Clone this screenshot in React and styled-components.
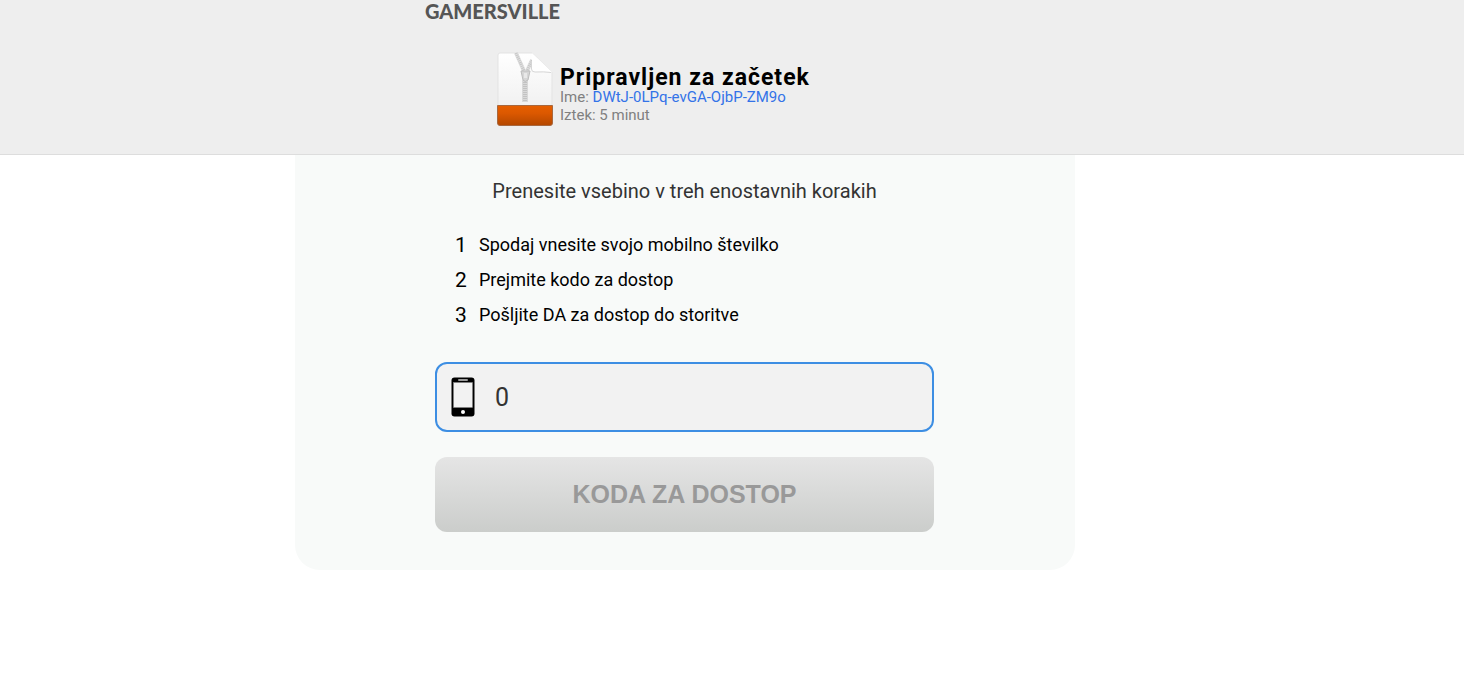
import React, { useState } from 'react';
import styled, { createGlobalStyle } from 'styled-components';

const GlobalStyle = createGlobalStyle`
    * {
        box-sizing: border-box;
    }

    body {
        margin: 0;
        background: #fff;
        font-family: Roboto, sans-serif;
    }
`;

const Header = styled.header`
    padding: 0 94px 28px 0;
    background: #eee;
    border-bottom: 1px solid #ddd;
`;

const HeaderInner = styled.div`
    max-width: 520px;
    margin: 0 auto;
`;

const Logo = styled.div`
    color: #555;
    font-family: Lato, sans-serif;
    font-size: 20px;
    font-weight: 900;
    line-height: 22px;
`;

const FileBox = styled.div`
    display: flex;
    gap: 7px;
    padding: 30px 0 0 72px;
`;

const FileInfo = styled.div`
    padding-top: 16px;
    color: #808080;
    font-size: 15px;
    line-height: 18px;
`;

const Title = styled.h1`
    margin: 0;
    color: #000;
    font-size: 23px;
    font-weight: 700;
    line-height: 20px;
    letter-spacing: 1px;
`;

const FileName = styled.span`
    color: #3373e8;
`;

const Main = styled.main`
    padding-right: 94px;
`;

const Card = styled.section`
    max-width: 780px;
    margin: 0 auto;
    padding: 24px 141px 38px 140px;
    background: #f8faf9;
    border-radius: 0 0 25px 25px;
`;

const Subtitle = styled.h2`
    margin: 0 0 24px;
    color: #333;
    font-size: 20px;
    font-weight: 400;
    line-height: 24px;
    text-align: center;
`;

const Steps = styled.ol`
    margin: 0 0 30px;
    padding: 0 0 0 20px;
    list-style: none;
`;

const Step = styled.li`
    display: flex;
    align-items: center;
    height: 35px;
    font-size: 18px;
`;

const StepNumber = styled.span`
    width: 24px;
    font-size: 21px;
`;

const PhoneField = styled.label`
    display: flex;
    align-items: center;
    gap: 20px;
    height: 70px;
    padding: 0 14px;
    background: #f2f2f2;
    border: 2px solid #3d8ee3;
    border-radius: 12px;
`;

const PhoneInput = styled.input`
    flex: 1;
    min-width: 0;
    padding: 0;
    border: 0;
    outline: 0;
    background: transparent;
    color: #333;
    font-family: inherit;
    font-size: 25px;
`;

const SubmitButton = styled.button`
    display: block;
    width: 100%;
    height: 75px;
    margin-top: 25px;
    border: 0;
    border-radius: 12px;
    background: linear-gradient(#e5e5e5, #cbcdcb);
    color: #999;
    font-family: 'Liberation Sans', Arial, sans-serif;
    font-size: 25px;
    font-weight: 700;
`;

const steps = [
    'Spodaj vnesite svojo mobilno številko',
    'Prejmite kodo za dostop',
    'Pošljite DA za dostop do storitve',
];

function ZipIcon() {
    return (
        <svg width="56" height="74" viewBox="0 0 56 74" aria-hidden="true">
            <defs>
                <linearGradient id="paper" x1="0" y1="0" x2="0" y2="1">
                    <stop offset="0" stopColor="#fff" />
                    <stop offset="1" stopColor="#ececec" />
                </linearGradient>
                <linearGradient id="band" x1="0" y1="0" x2="0" y2="1">
                    <stop offset="0" stopColor="#e65f00" />
                    <stop offset="0.4" stopColor="#db5800" />
                    <stop offset="1" stopColor="#b34700" />
                </linearGradient>
            </defs>
            <path d="M3 1H35L55 20V71Q55 73 53 73H3Q1 73 1 71V3Q1 1 3 1Z" fill="url(#paper)" stroke="#e3e3e3" />
            <path d="M.5 53.5H55.5V71Q55.500 73.500 53 73.5H3Q.5 73.5 .5 71Z" fill="url(#band)" stroke="#a8683f" />
            <path d="M19 1L27 19M35 8L30 19" fill="none" stroke="#e0e0e0" strokeWidth="4" />
            <path d="M19 1L27 19M35 8L30 19" fill="none" stroke="#c6c6c6" strokeWidth="3" strokeDasharray="1 1" />
            <path d="M28 28V50" stroke="#d9d9d9" strokeWidth="6" />
            <path d="M28 28V50" stroke="#c2c2c2" strokeWidth="4" strokeDasharray="1 1" />
            <path d="M24 19H33L31 28Q28 31 26 28Z" fill="#d6d6d6" stroke="#bcbcbc" />
            <path d="M27 21H30V26H27Z" fill="#e8e8e8" />
            <path d="M35 1L35 18Q35 20 38 20Q46 19 55 20Z" fill="#fff" />
            <path d="M34.5 9V17Q34.5 20 38 20Q47 19.5 54 20.5" fill="none" stroke="#d6d6d6" />
        </svg>
    );
}

function PhoneIcon() {
    return (
        <svg width="24" height="40" viewBox="0 0 24 40" aria-hidden="true">
            <rect x=".5" y=".5" width="23" height="39" rx="3" fill="#000" />
            <rect x="2.5" y="5.5" width="19" height="25" fill="#f2f2f2" stroke="#888" strokeWidth=".5" />
            <rect x="7" y="2" width="10" height="2" rx="1" fill="#999" />
            <circle cx="12" cy="35" r="2" fill="#fff" />
        </svg>
    );
}

function App() {
    const [phone, setPhone] = useState('0');

    return (
        <>
            <GlobalStyle />
            <Header>
                <HeaderInner>
                    <Logo>GAMERSVILLE</Logo>
                    <FileBox>
                        <ZipIcon />
                        <FileInfo>
                            <Title>Pripravljen za začetek</Title>
                            <div>
                                Ime: <FileName>DWtJ-0LPq-evGA-OjbP-ZM9o</FileName>
                            </div>
                            <div>Iztek: 5 minut</div>
                        </FileInfo>
                    </FileBox>
                </HeaderInner>
            </Header>
            <Main>
                <Card>
                    <Subtitle>Prenesite vsebino v treh enostavnih korakih</Subtitle>
                    <Steps>
                        {steps.map((text, index) => (
                            <Step key={text}>
                                <StepNumber>{index + 1}</StepNumber>
                                {text}
                            </Step>
                        ))}
                    </Steps>
                    <PhoneField>
                        <PhoneIcon />
                        <PhoneInput
                            type="tel"
                            aria-label="Mobilna številka"
                            value={phone}
                            onChange={(event) => setPhone(event.target.value)}
                        />
                    </PhoneField>
                    <SubmitButton type="button" disabled={phone.length < 9}>
                        KODA ZA DOSTOP
                    </SubmitButton>
                </Card>
            </Main>
        </>
    );
}

export default App;
